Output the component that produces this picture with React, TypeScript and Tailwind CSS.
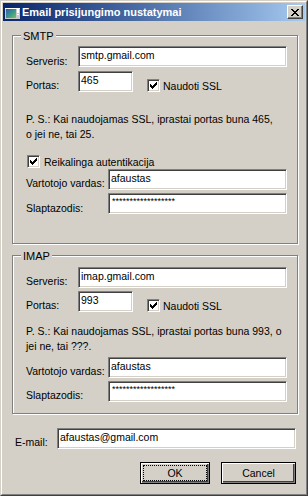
import type { ReactNode } from 'react';

const font = "font-['Liberation_Sans',Arial,sans-serif]";

function Field({ w, children, pw }: { w: string; children?: ReactNode; pw?: boolean }) {
    return (
        <div
            className={`${w} h-[21px] shrink-0 overflow-hidden whitespace-nowrap border border-t-[#808080] border-l-[#808080] border-r-white border-b-white bg-white shadow-[inset_1px_1px_0_#404040,inset_-1px_-1px_0_#d4d0c8] ${
                pw ? 'pl-[3px] pt-[1px] text-[9px] leading-[12px]' : 'pl-[2px] pt-[2px] text-[10.5px] leading-[12px]'
            } text-black`}
        >
            {children}
        </div>
    );
}

function Check() {
    return (
        <div className="h-[13px] w-[13px] shrink-0 border border-t-[#808080] border-l-[#808080] border-r-white border-b-white bg-white shadow-[inset_1px_1px_0_#404040,inset_-1px_-1px_0_#d4d0c8]">
            <svg width="11" height="11" viewBox="0 0 11 11" shapeRendering="crispEdges">
                <rect x="2" y="4" width="1" height="3" fill="#000" />
                <rect x="3" y="5" width="1" height="3" fill="#000" />
                <rect x="4" y="6" width="1" height="3" fill="#000" />
                <rect x="5" y="5" width="1" height="3" fill="#000" />
                <rect x="6" y="4" width="1" height="3" fill="#000" />
                <rect x="7" y="3" width="1" height="3" fill="#000" />
                <rect x="8" y="2" width="1" height="3" fill="#000" />
            </svg>
        </div>
    );
}

function Group({ title, className, children }: { title: string; className?: string; children: ReactNode }) {
    return (
        <div
            className={`relative flex flex-col border border-[#808080] pl-[13px] shadow-[inset_1px_1px_0_#fff,1px_1px_0_#fff] ${className ?? ''}`}
        >
            <span className="absolute left-[8px] top-[-6px] bg-[#d4d0c8] px-[2px] text-[11px] leading-[12px]">
                {title}
            </span>
            {children}
        </div>
    );
}

function Row({ label, lw, pt = 'pt-[8px]', children, className }: { label: string; lw: string; pt?: string; children: ReactNode; className?: string }) {
    return (
        <div className={`flex items-start ${className ?? ''}`}>
            <div className={`${lw} shrink-0 whitespace-nowrap ${pt} text-[10.5px] leading-[12px]`}>{label}</div>
            {children}
        </div>
    );
}

function Button({ label, w, focus }: { label: string; w: string; focus?: boolean }) {
    return (
        <div className={`${w} flex h-[22px] border border-black bg-[#d4d0c8] p-[2px] shadow-[inset_1px_1px_0_#fff,inset_-1px_-1px_0_#808080,inset_-2px_-2px_0_#404040]`}>
            <div className={`flex flex-1 items-center justify-center border border-dotted text-[10.5px] leading-[12px] ${focus ? 'border-black' : 'border-transparent'}`}>
                {label}
            </div>
        </div>
    );
}

function TitleIcon() {
    return (
        <svg width="16" height="16" viewBox="0 0 16 16" shapeRendering="crispEdges">
            <defs>
                <linearGradient id="ic" x1="0" y1="0" x2="1" y2="1">
                    <stop offset="0" stopColor="#2f5ea8" />
                    <stop offset="0.55" stopColor="#3a9a8a" />
                    <stop offset="1" stopColor="#7dc060" />
                </linearGradient>
            </defs>
            <rect x="0" y="4" width="15" height="11" fill="#c8c8c8" />
            <rect x="0" y="4" width="15" height="1" fill="#ffffff" />
            <rect x="1" y="5" width="10" height="9" fill="url(#ic)" />
            <rect x="12" y="5" width="2" height="4" fill="#ffffff" />
            <rect x="12" y="10" width="2" height="1" fill="#ffffff" />
        </svg>
    );
}

function SslCheck() {
    return (
        <div className="ml-[14px] mt-[8px] flex items-center">
            <Check />
            <span className="ml-[3px] text-[10.5px] leading-[12px]">Naudoti SSL</span>
        </div>
    );
}

export default function App() {
    return (
        <div className={`${font} h-[496px] w-[308px] select-none text-black`}>
            <div className="flex h-full flex-col border border-t-[#d4d0c8] border-l-[#d4d0c8] border-r-[#404040] border-b-[#404040]">
                <div className="flex h-full flex-col border border-t-white border-l-white border-r-[#808080] border-b-[#808080] bg-[#d4d0c8] p-[1px]">
                    {/* title bar */}
                    <div className="flex h-[18px] shrink-0 items-center bg-gradient-to-r from-[#0a246a] to-[#a6caf0] pl-[2px] pr-[2px]">
                        <TitleIcon />
                        <span className="ml-[1px] flex-1 text-[11px] font-bold leading-[12px] text-white">
                            Email prisijungimo nustatymai
                        </span>
                        <div className="flex h-[14px] w-[16px] items-center justify-center border border-t-white border-l-white border-r-[#404040] border-b-[#404040] bg-[#d4d0c8] shadow-[inset_-1px_-1px_0_#808080]">
                            <svg width="8" height="7" viewBox="0 0 8 7" shapeRendering="crispEdges">
                                <path d="M0 0h2v1H0zM6 0h2v1H6zM1 1h2v1H1zM5 1h2v1H5zM2 2h4v1H2zM3 3h2v1H3zM2 4h4v1H2zM1 5h2v1H1zM5 5h2v1H5zM0 6h2v1H0zM6 6h2v1H6z" fill="#000" />
                            </svg>
                        </div>
                    </div>

                    <div className="flex flex-1 flex-col pl-[9px] pr-[7px] pt-[14px]">
                        <Group title="SMTP" className="pb-[29px]">
                            <Row label="Serveris:" lw="w-[52px]" pt="pt-[9px]" className="mt-[10px]">
                                <Field w="w-[209px]">smtp.gmail.com</Field>
                            </Row>
                            <Row label="Portas:" lw="w-[52px]" className="mt-[4px]">
                                <Field w="w-[55px]">465</Field>
                                <SslCheck />
                            </Row>
                            <p className="mt-[20px] whitespace-nowrap text-[10.5px] leading-[15px]">
                                P. S.: Kai naudojamas SSL, iprastai portas buna 465,
                                <br />o jei ne, tai 25.
                            </p>
                            <div className="ml-[1px] mt-[13px] flex items-center">
                                <Check />
                                <span className="ml-[4px] text-[10.5px] leading-[12px]">Reikalinga autentikacija</span>
                            </div>
                            <Row label="Vartotojo vardas:" lw="w-[82px]" className="mt-[1px]">
                                <Field w="w-[179px]">afaustas</Field>
                            </Row>
                            <Row label="Slaptazodis:" lw="w-[82px]" pt="pt-[9px]" className="mt-[3px]">
                                <Field w="w-[179px]" pw>
                                    ******************
                                </Field>
                            </Row>
                        </Group>

                        <Group title="IMAP" className="mt-[11px] pb-[11px]">
                            <Row label="Serveris:" lw="w-[52px]" className="mt-[11px]">
                                <Field w="w-[209px]">imap.gmail.com</Field>
                            </Row>
                            <Row label="Portas:" lw="w-[52px]" className="mt-[3px]">
                                <Field w="w-[55px]">993</Field>
                                <SslCheck />
                            </Row>
                            <p className="mt-[12px] whitespace-nowrap text-[10.5px] leading-[15px]">
                                P. S.: Kai naudojamas SSL, iprastai portas buna 993, o
                                <br />jei ne, tai ???.
                            </p>
                            <Row label="Vartotojo vardas:" lw="w-[82px]" className="mt-[3px]">
                                <Field w="w-[179px]">afaustas</Field>
                            </Row>
                            <Row label="Slaptazodis:" lw="w-[82px]" className="mt-[3px]">
                                <Field w="w-[179px]" pw>
                                    ******************
                                </Field>
                            </Row>
                        </Group>

                        <Row label="E-mail:" lw="w-[42px]" className="ml-[3px] mt-[14px]">
                            <Field w="w-[239px]">afaustas@gmail.com</Field>
                        </Row>

                        <div className="mt-[13px] flex justify-end gap-[11px] pr-[2px]">
                            <Button label="OK" w="w-[70px]" focus />
                            <Button label="Cancel" w="w-[75px]" />
                        </div>
                    </div>
                </div>
            </div>
        </div>
    );
}
